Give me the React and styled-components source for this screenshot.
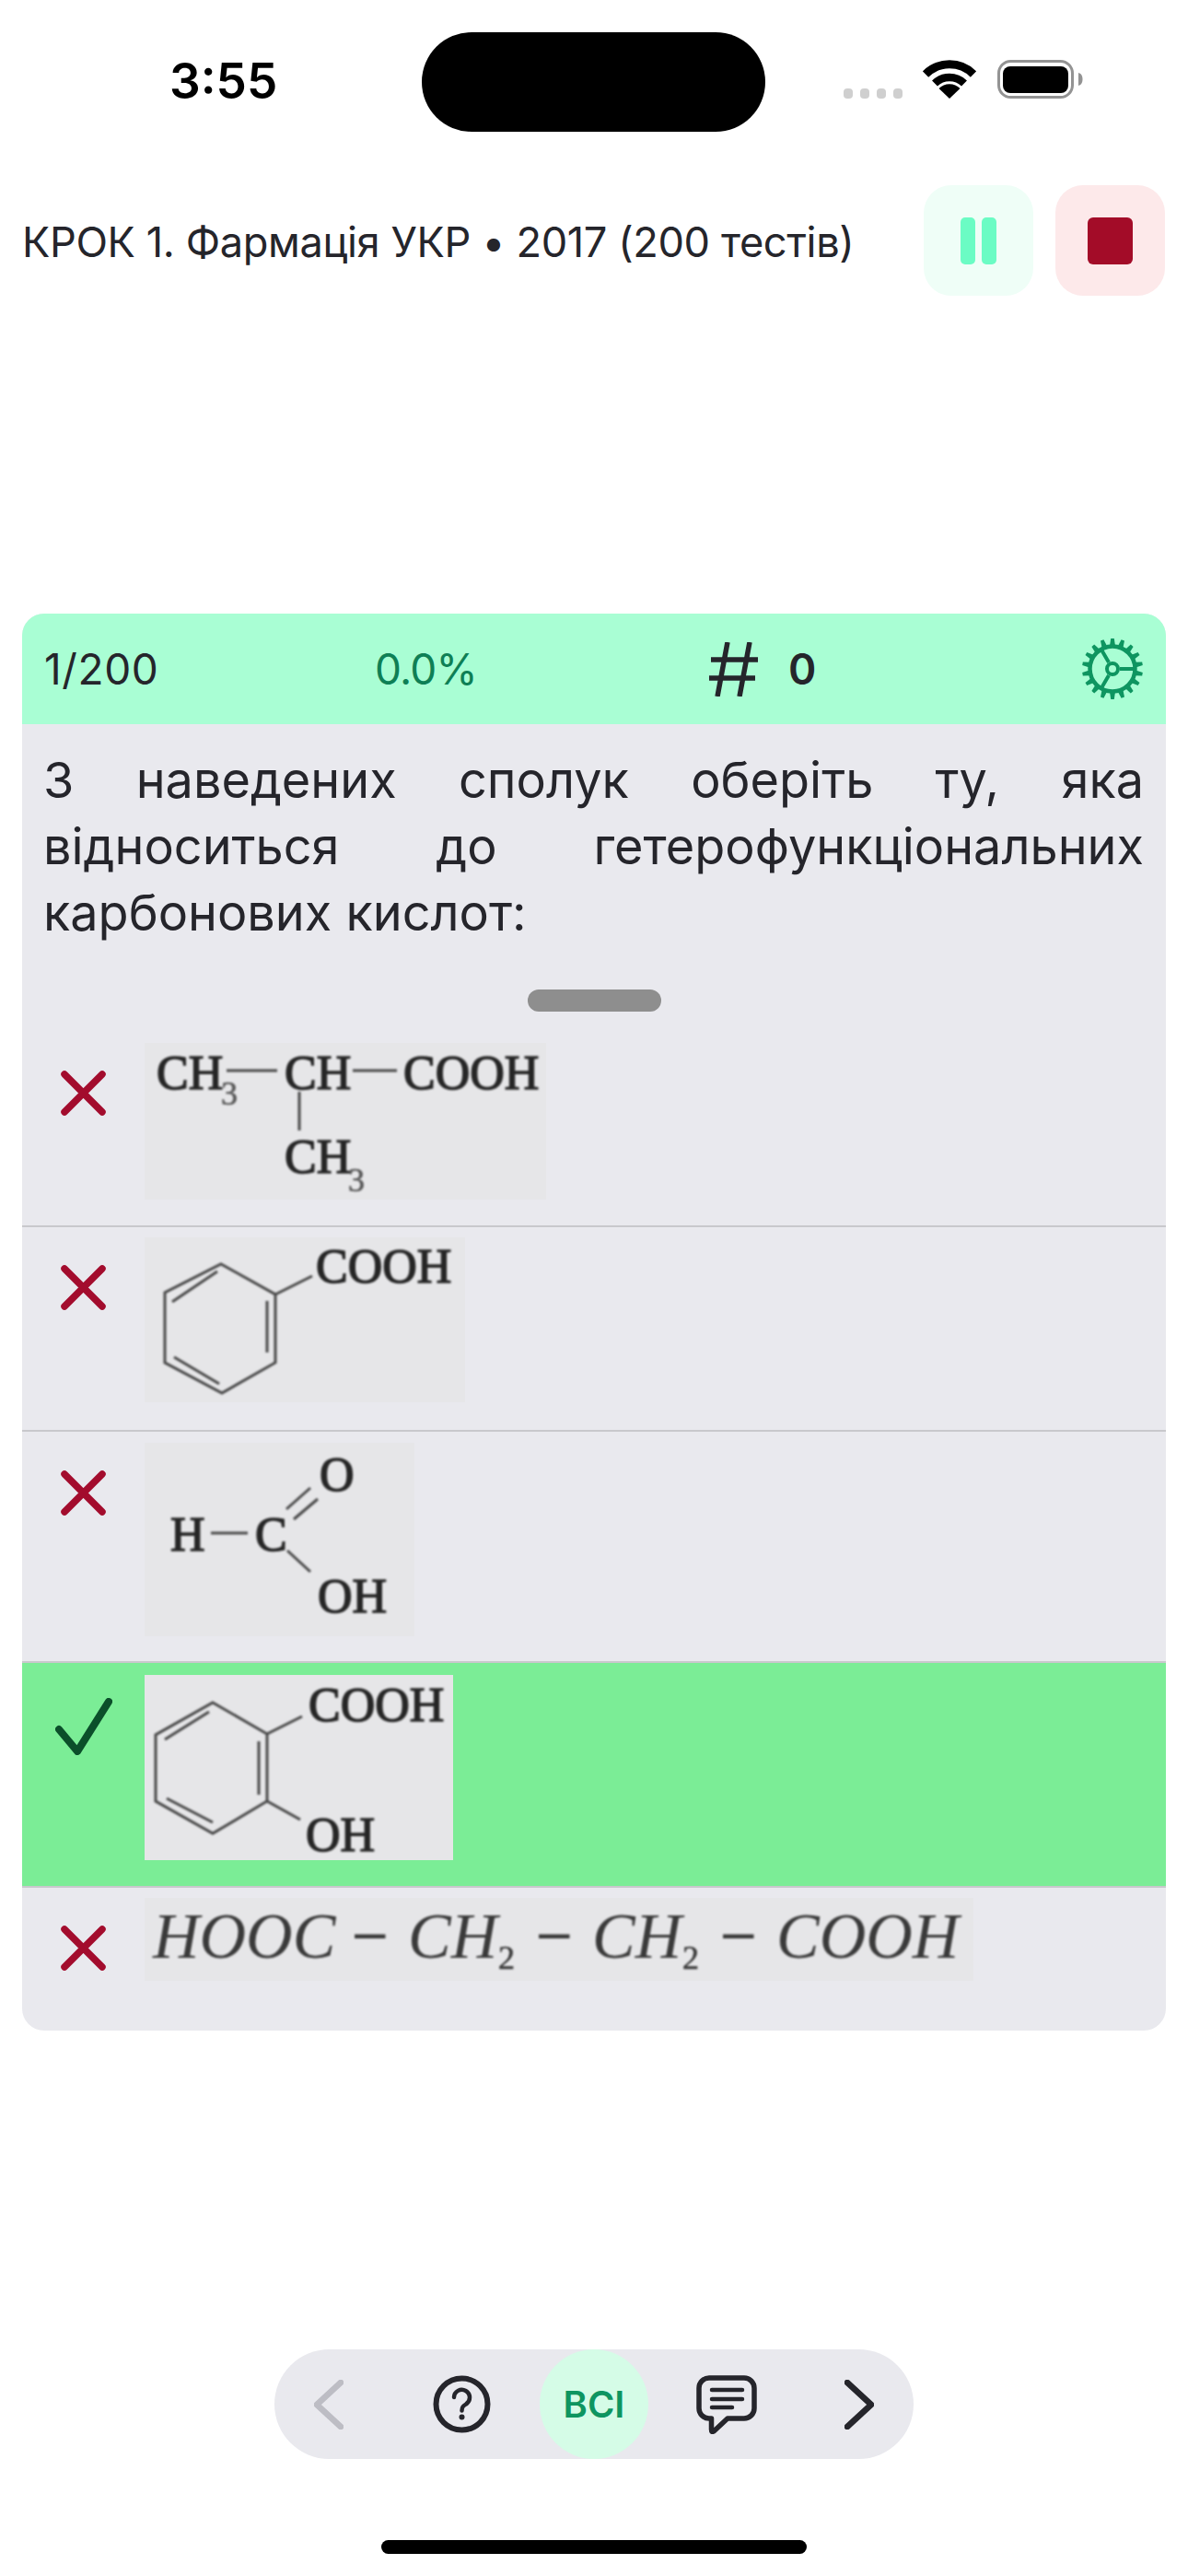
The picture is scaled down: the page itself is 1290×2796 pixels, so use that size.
import React from "react";
import styled, { createGlobalStyle } from "styled-components";

const Global = createGlobalStyle`
  html, body {
    margin: 0;
    padding: 0;
    background: #fff;
    font-family: "Inter", "Liberation Sans", sans-serif;
    color: #25252b;
  }
`;

const Page = styled.div`
  width: 1290px;
  height: 2796px;
  overflow: hidden;
  display: flex;
  flex-direction: column;
`;

const StatusBar = styled.div`
  display: flex;
  height: 108px;
  margin-top: 35px;
  padding-left: 184px;
`;

const Time = styled.div`
  width: 274px;
  padding-top: 20px;
  font-size: 53px;
  line-height: 66px;
  font-weight: 600;
  color: #000;
`;

const Island = styled.div`
  width: 373px;
  height: 108px;
  border-radius: 54px;
  background: #000;
`;

const StatusIcons = styled.div`
  display: flex;
  align-items: flex-end;
  height: 72px;
  margin-left: 85px;
`;

const Signal = styled.div`
  display: flex;
  gap: 8px;
  margin-right: 22px;
`;

const Dot = styled.span`
  width: 10px;
  height: 11px;
  border-radius: 4px;
  background: #cfcfcf;
`;

const Battery = styled.svg`
  margin-left: 23px;
`;

const TopBar = styled.div`
  display: flex;
  align-items: center;
  margin-top: 58px;
  padding: 0 25px 0 24px;
`;

const Title = styled.div`
  flex: 1;
  padding-top: 2px;
  font-size: 45.2px;
  white-space: nowrap;
  letter-spacing: -0.4px;
`;

const SquareButton = styled.button`
  width: 119px;
  height: 120px;
  margin-left: ${(p) => p.$gap}px;
  border: none;
  border-radius: 30px;
  padding: 0;
  display: flex;
  align-items: center;
  justify-content: center;
  gap: 7px;
  background: ${(p) => p.$bg};
`;

const PauseBar = styled.span`
  width: 16px;
  height: 51px;
  border-radius: 5px;
  background: #6bfcc4;
`;

const StopMark = styled.span`
  width: 49px;
  height: 51px;
  border-radius: 6px;
  background: #a30c28;
`;

const Card = styled.div`
  width: 1242px;
  margin: 345px 0 0 24px;
  border-radius: 24px;
  overflow: hidden;
  background: #e9e9ee;
`;

const CardHeader = styled.div`
  display: grid;
  grid-template-columns: 359px 363px 1fr auto;
  align-items: center;
  height: 120px;
  padding: 0 23px 0 24px;
  background: #a9fed4;
  font-size: 46px;
`;

const Progress = styled.div`
  letter-spacing: 0.6px;
`;

const Percent = styled.div`
  color: #0e7f55;
  letter-spacing: -0.8px;
`;

const Counter = styled.div`
  display: flex;
  align-items: center;
  gap: 33px;
  font-weight: 600;
`;

const Question = styled.div`
  padding: 25px 24px 0 23px;
  font-size: 54px;
  line-height: 72px;
  text-align: justify;
`;

const Handle = styled.div`
  width: 145px;
  height: 24px;
  margin: 47px auto 22px;
  border-radius: 12px;
  background: #8e8e8e;
`;

const Row = styled.div`
  display: flex;
  padding: ${(p) => p.$top}px 0 ${(p) => p.$bottom}px;
  border-top: ${(p) => (p.$first ? "none" : "2px solid #c8c8cc")};
  background: ${(p) => (p.$correct ? "#7bed96" : "transparent")};
`;

const IconSlot = styled.div`
  width: 133px;
  display: flex;
  justify-content: center;
  align-items: flex-start;
  padding-top: ${(p) => p.$offset}px;
`;

const Chem = styled.svg`
  display: block;
  background: #e6e6e8;

  g {
    filter: blur(0.8px);
  }
  text {
    font-family: "Liberation Serif", serif;
    font-size: 52px;
    fill: #262626;
    stroke: #262626;
    stroke-width: 1.5px;
  }
  text.sub {
    font-size: 36px;
    fill: #555;
    stroke: #555;
    stroke-width: 0.6px;
  }
  text.formula {
    font-size: 70px;
    fill: #3a3a3a;
    stroke: none;
  }
  tspan.math {
    font-style: italic;
  }
  tspan.dash {
    font-size: 70px;
    stroke: #3a3a3a;
    stroke-width: 0.8px;
  }
  tspan.mathsub {
    font-size: 36px;
    stroke: #3a3a3a;
    stroke-width: 0.6px;
  }
  line, polygon {
    stroke: #4a4a4a;
    stroke-width: 3px;
    fill: none;
  }
`;

const Nav = styled.div`
  display: flex;
  justify-content: space-between;
  align-items: center;
  width: 694px;
  height: 119px;
  margin: 346px 0 0 298px;
  border-radius: 60px;
  background: #e9e9ee;
`;

const NavItem = styled.div`
  width: 118px;
  height: 119px;
  display: flex;
  align-items: center;
  justify-content: center;
  border-radius: 50%;
  background: ${(p) => (p.$active ? "#d5fce7" : "transparent")};
  color: #0e9560;
  font-size: 40px;
  font-weight: 600;
`;

const HomeBar = styled.div`
  width: 462px;
  height: 15px;
  margin: 88px 0 0 414px;
  border-radius: 8px;
  background: #000;
`;

const Wifi = () => (
  <svg width="58" height="42" viewBox="0 0 58 42" fill="none">
    <path d="M3 15.5A37 37 0 0 1 55 15.5" stroke="#000" strokeWidth="9" />
    <path d="M13 25.5A23 23 0 0 1 45 25.5" stroke="#000" strokeWidth="8.5" />
    <path d="M29 42L17.5 31A16.5 16.5 0 0 1 40.5 31Z" fill="#000" />
  </svg>
);

const BatteryIcon = () => (
  <Battery width="93" height="42" viewBox="0 0 93 42">
    <rect x="1.5" y="1.5" width="80" height="39" rx="13" fill="none" stroke="#939393" strokeWidth="3" />
    <rect x="6" y="7" width="71" height="29" rx="8" fill="#000" />
    <path d="M88 14C91.5 15 92.5 18 92.5 21S91.5 27 88 28Z" fill="#939393" />
  </Battery>
);

const Hash = () => (
  <svg width="53" height="59" viewBox="0 0 53 59" stroke="#25252b" strokeWidth="5.5">
    <path d="M20 0L9 59M44 0L33 59" />
    <path d="M2 19H53M0 39H50" />
  </svg>
);

const gearTeeth = Array.from({ length: 18 }, (_, i) => (i * 360) / 18);

const Gear = () => (
  <svg width="70" height="68" viewBox="-35 -34 70 68" fill="none" stroke="#0e9560">
    <circle r="24.5" strokeWidth="4.5" />
    {gearTeeth.map((a) => (
      <path key={a} d="M-1.8 -33H1.8L3 -25H-3Z" fill="#0e9560" stroke="none" transform={`rotate(${a})`} />
    ))}
    <circle r="6" strokeWidth="4" />
    <path d="M8 0H24M-4 -6.9L-12 -20.8M-4 6.9L-12 20.8" strokeWidth="4" />
  </svg>
);

const Cross = () => (
  <svg width="49" height="49" viewBox="0 0 49 49" stroke="#a30c2d" strokeWidth="7.5" strokeLinecap="round">
    <path d="M4 4L45 45M45 4L4 45" />
  </svg>
);

const Tick = () => (
  <svg width="62" height="62" viewBox="0 0 62 62" fill="none" stroke="#0b4f2a" strokeWidth="8" strokeLinecap="round" strokeLinejoin="round">
    <path d="M4 34L24 58L58 4" />
  </svg>
);

const Chevron = ({ color, flip }) => (
  <svg width="32" height="54" viewBox="0 0 32 54" fill="none" stroke={color} strokeWidth="6.5" strokeLinecap="round" strokeLinejoin="round">
    <path d={flip ? "M3 3L29 27L3 51" : "M29 3L3 27L29 51"} />
  </svg>
);

const HelpIcon = () => (
  <svg width="63" height="63" viewBox="0 0 63 63" fill="none" stroke="#25252b">
    <circle cx="31.5" cy="31.5" r="28" strokeWidth="6" />
    <path d="M23 24A8.5 8.5 0 1 1 36 31.5C33 33.5 31.5 34.5 31.5 38.5" strokeWidth="4.5" strokeLinecap="round" />
    <circle cx="31.5" cy="45.5" r="3" fill="#25252b" stroke="none" />
  </svg>
);

const ChatIcon = () => (
  <svg width="66" height="64" viewBox="0 0 66 64" fill="none" stroke="#25252b" strokeWidth="5.5" strokeLinejoin="round" strokeLinecap="round">
    <path d="M14 3H52A11 11 0 0 1 63 14V36A11 11 0 0 1 52 47H34L19 61Q16.5 62.5 16.5 59V47H14A11 11 0 0 1 3 36V14A11 11 0 0 1 14 3Z" />
    <path d="M17 16H50M17 26H50M17 35H39" strokeWidth="4.5" />
  </svg>
);

const Methylpropanoic = () => (
  <Chem width="436" height="170" viewBox="0 0 436 170">
    <g>
      <text x="13" y="50">CH</text>
      <text className="sub" x="83" y="67">3</text>
      <line x1="89" y1="30" x2="144" y2="30" />
      <text x="152" y="50">CH</text>
      <line x1="226" y1="30" x2="274" y2="30" />
      <text x="281" y="50">COOH</text>
      <line x1="168" y1="53" x2="168" y2="95" />
      <text x="152" y="141">CH</text>
      <text className="sub" x="221" y="161">3</text>
    </g>
  </Chem>
);

const Benzoic = () => (
  <Chem width="348" height="179" viewBox="0 0 348 179">
    <g>
      <polygon points="83,29 142,62 142,136 84,169 22,136 22,60" />
      <line x1="30" y1="70" x2="79" y2="37" />
      <line x1="133" y1="69" x2="133" y2="125" />
      <line x1="32" y1="130" x2="81" y2="159" />
      <line x1="142" y1="62" x2="182" y2="42" />
      <text x="186" y="49">COOH</text>
    </g>
  </Chem>
);

const Formic = () => (
  <Chem width="293" height="210" viewBox="0 0 293 210">
    <g>
      <text x="190" y="52">O</text>
      <text x="28" y="117">H</text>
      <line x1="72" y1="98" x2="112" y2="98" />
      <text x="120" y="117">C</text>
      <line x1="154" y1="72" x2="180" y2="49" />
      <line x1="162" y1="83" x2="188" y2="61" />
      <line x1="155" y1="117" x2="180" y2="140" />
      <text x="188" y="184">OH</text>
    </g>
  </Chem>
);

const Salicylic = () => (
  <Chem width="335" height="201" viewBox="0 0 335 201">
    <g>
      <polygon points="74,30 133,64 133,137 74,172 12,137 12,65" />
      <line x1="22" y1="70" x2="70" y2="40" />
      <line x1="124" y1="72" x2="124" y2="130" />
      <line x1="24" y1="134" x2="74" y2="160" />
      <line x1="133" y1="64" x2="171" y2="45" />
      <text x="178" y="50">COOH</text>
      <line x1="133" y1="137" x2="169" y2="157" />
      <text x="175" y="191">OH</text>
    </g>
  </Chem>
);

const Succinic = () => (
  <Chem width="900" height="90" viewBox="0 0 900 90">
    <g>
      <text className="formula">
        <tspan className="math" x="9" y="65">HOOC</tspan>
        <tspan className="dash" x="225" y="65">−</tspan>
        <tspan className="math" x="286" y="65">CH</tspan>
        <tspan className="mathsub" x="384" y="77">2</tspan>
        <tspan className="dash" x="425" y="65">−</tspan>
        <tspan className="math" x="486" y="65">CH</tspan>
        <tspan className="mathsub" x="584" y="77">2</tspan>
        <tspan className="dash" x="625" y="65">−</tspan>
        <tspan className="math" x="686" y="65">COOH</tspan>
      </text>
    </g>
  </Chem>
);

const answers = [
  { id: 1, Formula: Methylpropanoic, top: 12, bottom: 28, first: true },
  { id: 2, Formula: Benzoic, top: 11, bottom: 30 },
  { id: 3, Formula: Formic, top: 12, bottom: 27 },
  { id: 4, Formula: Salicylic, top: 13, bottom: 28, correct: true },
  { id: 5, Formula: Succinic, top: 11, bottom: 54 },
];

const App = () => (
  <Page>
    <Global />
    <StatusBar>
      <Time>3:55</Time>
      <Island />
      <StatusIcons>
        <Signal>
          <Dot />
          <Dot />
          <Dot />
          <Dot />
        </Signal>
        <Wifi />
        <BatteryIcon />
      </StatusIcons>
    </StatusBar>

    <TopBar>
      <Title>КРОК 1. Фармація УКР • 2017 (200 тестів)</Title>
      <SquareButton $bg="#effef7" $gap={0}>
        <PauseBar />
        <PauseBar />
      </SquareButton>
      <SquareButton $bg="#fde9ea" $gap={24}>
        <StopMark />
      </SquareButton>
    </TopBar>

    <Card>
      <CardHeader>
        <Progress>1/200</Progress>
        <Percent>0.0%</Percent>
        <Counter>
          <Hash />
          <span>0</span>
        </Counter>
        <Gear />
      </CardHeader>
      <Question>
        З наведених сполук оберіть ту, яка відноситься до гетерофункціональних карбонових кислот:
      </Question>
      <Handle />
      {answers.map(({ id, Formula, top, bottom, first, correct }) => (
        <Row key={id} $top={top} $bottom={bottom} $first={first} $correct={correct}>
          <IconSlot $offset={correct ? 25 : 30}>{correct ? <Tick /> : <Cross />}</IconSlot>
          <Formula />
        </Row>
      ))}
    </Card>

    <Nav>
      <NavItem>
        <Chevron color="#bdbdc4" />
      </NavItem>
      <NavItem>
        <HelpIcon />
      </NavItem>
      <NavItem $active>ВСІ</NavItem>
      <NavItem>
        <ChatIcon />
      </NavItem>
      <NavItem>
        <Chevron color="#25252b" flip />
      </NavItem>
    </Nav>
    <HomeBar />
  </Page>
);

export default App;
